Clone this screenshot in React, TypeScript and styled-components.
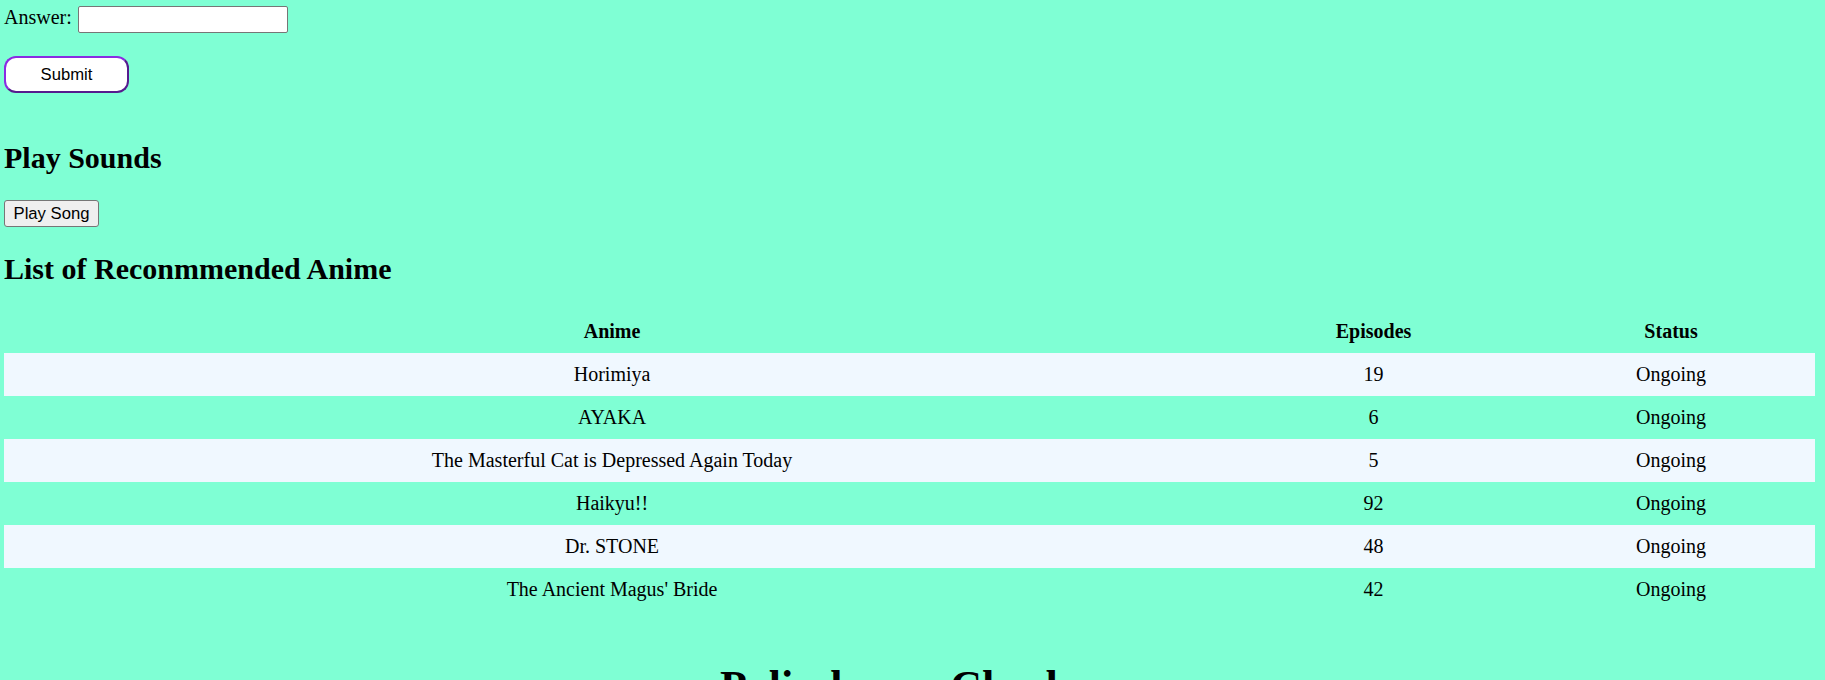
import React from "react";
import styled, { createGlobalStyle } from "styled-components";

const GlobalStyle = createGlobalStyle`
  html, body {
    margin: 0;
    padding: 0;
    background: #7fffd4;
  }
  body {
    font-family: "Liberation Serif", "Times New Roman", serif;
    font-size: 20px;
    color: #000;
  }
`;

const Page = styled.div`
  padding: 6px 0 0 4px;
  background: #7fffd4;
  min-height: 680px;
  box-sizing: border-box;
`;

const AnswerRow = styled.div`
  display: flex;
  align-items: flex-start;
  gap: 6px;
  line-height: normal;
`;

const Label = styled.label`
  font-size: 20px;
`;

const AnswerInput = styled.input`
  box-sizing: border-box;
  width: 210px;
  height: 27px;
  border: 1px solid #767676;
  border-radius: 2px;
  background: #fff;
  padding: 1px 3px;
  font-family: "Liberation Sans", Arial, sans-serif;
  font-size: 16.67px;
  outline: none;
`;

const SubmitButton = styled.button`
  box-sizing: border-box;
  display: block;
  margin-top: 23px;
  width: 125px;
  height: 37px;
  border: 2px outset #8a2be2;
  border-radius: 12px;
  background: #fff;
  color: #000;
  font-family: "Liberation Sans", Arial, sans-serif;
  font-size: 16.67px;
  padding: 0;
  cursor: pointer;
`;

const Heading2 = styled.h2<{ $top: number; $bottom: number }>`
  font-size: 30px;
  font-weight: bold;
  line-height: normal;
  margin: ${(p) => p.$top}px 0 ${(p) => p.$bottom}px 0;
`;

const PlayButton = styled.button`
  box-sizing: border-box;
  display: block;
  width: 95px;
  height: 27px;
  border: 1px solid #767676;
  border-radius: 3px;
  background: #efefef;
  color: #000;
  font-family: "Liberation Sans", Arial, sans-serif;
  font-size: 16.67px;
  padding: 0;
`;

const Table = styled.table`
  width: calc(100% - 10px);
  border-collapse: collapse;
  table-layout: fixed;
  font-size: 20px;
`;

const HeadCell = styled.th<{ $w: string }>`
  width: ${(p) => p.$w};
  font-weight: bold;
  text-align: center;
  padding: 10px 0;
  line-height: 23px;
`;

const BodyRow = styled.tr<{ $striped: boolean }>`
  background: ${(p) => (p.$striped ? "#f0f8ff" : "transparent")};
`;

const Cell = styled.td`
  text-align: center;
  padding: 10px 0;
  line-height: 23px;
`;

const Heading1 = styled.h1`
  font-size: 44px;
  font-weight: bold;
  text-align: center;
  line-height: normal;
  margin: 50px 0 0 0;
`;

const anime = [
  { name: "Horimiya", eps: 19, status: "Ongoing" },
  { name: "AYAKA", eps: 6, status: "Ongoing" },
  { name: "The Masterful Cat is Depressed Again Today", eps: 5, status: "Ongoing" },
  { name: "Haikyu!!", eps: 92, status: "Ongoing" },
  { name: "Dr. STONE", eps: 48, status: "Ongoing" },
  { name: "The Ancient Magus' Bride", eps: 42, status: "Ongoing" },
];

export default function App() {
  return (
    <>
      <GlobalStyle />
      <Page>
        <AnswerRow>
          <Label htmlFor="answer">Answer:</Label>
          <AnswerInput id="answer" type="text" />
        </AnswerRow>
        <SubmitButton>Submit</SubmitButton>

        <Heading2 $top={48} $bottom={25}>Play Sounds</Heading2>
        <PlayButton>Play Song</PlayButton>

        <Heading2 $top={25} $bottom={24}>List of Reconmmended Anime</Heading2>
        <Table>
          <thead>
            <tr>
              <HeadCell $w="67.15%">Anime</HeadCell>
              <HeadCell $w="16.95%">Episodes</HeadCell>
              <HeadCell $w="15.9%">Status</HeadCell>
            </tr>
          </thead>
          <tbody>
            {anime.map((a, i) => (
              <BodyRow key={a.name} $striped={i % 2 === 0}>
                <Cell>{a.name}</Cell>
                <Cell>{a.eps}</Cell>
                <Cell>{a.status}</Cell>
              </BodyRow>
            ))}
          </tbody>
        </Table>

        <Heading1>Palindrome Checker</Heading1>
      </Page>
    </>
  );
}
